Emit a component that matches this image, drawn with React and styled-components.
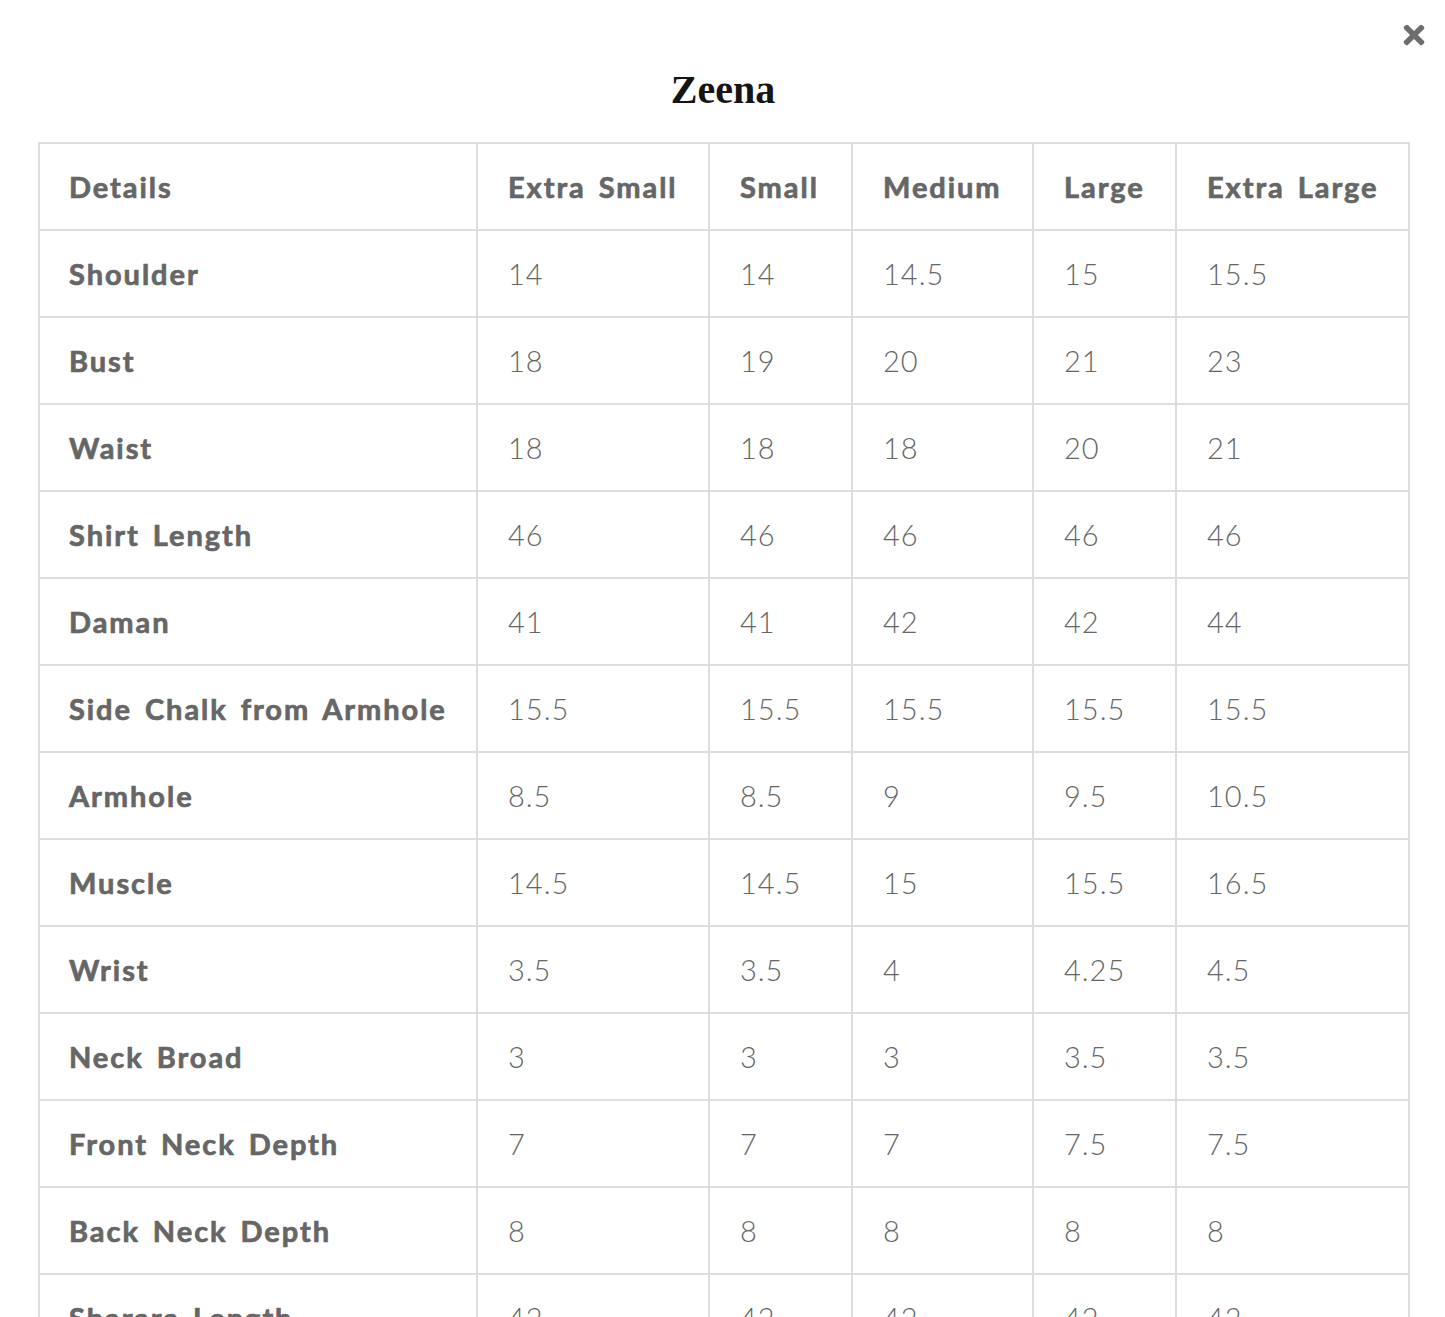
import React from 'react';
import styled, { createGlobalStyle } from 'styled-components';
import { FaTimes } from 'react-icons/fa';

const GlobalStyle = createGlobalStyle`
  html, body {
    margin: 0;
    padding: 0;
    background: #fff;
  }
  body {
    font-family: Lato, 'Liberation Sans', sans-serif;
    color: #666;
  }
`;

const Modal = styled.div`
  position: relative;
  padding: 64px 37px 0 38px;
  height: 1317px;
  overflow: hidden;
  box-sizing: border-box;
`;

const CloseButton = styled.button`
  position: absolute;
  top: 20px;
  right: 16px;
  border: 0;
  background: none;
  padding: 0;
  color: #6d6d6d;
  font-size: 30px;
  line-height: 0;
  cursor: pointer;
`;

const Title = styled.h2`
  margin: 0 0 26px;
  text-align: center;
  font-family: 'Liberation Serif', 'DejaVu Serif', serif;
  font-weight: 700;
  font-size: 40px;
  line-height: 52px;
  color: #151515;
`;

const Table = styled.table`
  width: 1370px;
  table-layout: fixed;
  border-collapse: collapse;
`;

const Cell = styled.td`
  height: 85px;
  padding: 0 0 0 ${({ first }) => (first ? 29 : 30)}px;
  border: 2px solid #ddd;
  font-size: 29px;
  font-weight: ${({ bold }) => (bold ? 700 : 300)};
  letter-spacing: ${({ bold }) => (bold ? '1.95px' : '1px')};
  word-spacing: ${({ bold }) => (bold ? '4px' : '0')};
  -webkit-text-stroke: ${({ bold }) => (bold ? '0.7px #666' : '0')};
  color: #666;
  text-align: left;
  vertical-align: middle;
  white-space: nowrap;
`;

const widths = [438, 232, 143, 181, 143, 233];

const sizes = ['Extra Small', 'Small', 'Medium', 'Large', 'Extra Large'];

const rows = [
  ['Shoulder', '14', '14', '14.5', '15', '15.5'],
  ['Bust', '18', '19', '20', '21', '23'],
  ['Waist', '18', '18', '18', '20', '21'],
  ['Shirt Length', '46', '46', '46', '46', '46'],
  ['Daman', '41', '41', '42', '42', '44'],
  ['Side Chalk from Armhole', '15.5', '15.5', '15.5', '15.5', '15.5'],
  ['Armhole', '8.5', '8.5', '9', '9.5', '10.5'],
  ['Muscle', '14.5', '14.5', '15', '15.5', '16.5'],
  ['Wrist', '3.5', '3.5', '4', '4.25', '4.5'],
  ['Neck Broad', '3', '3', '3', '3.5', '3.5'],
  ['Front Neck Depth', '7', '7', '7', '7.5', '7.5'],
  ['Back Neck Depth', '8', '8', '8', '8', '8'],
  ['Sharara Length', '42', '42', '42', '42', '42'],
];

const App = () => (
  <>
    <GlobalStyle />
    <Modal>
      <CloseButton aria-label="Close">
        <FaTimes />
      </CloseButton>
      <Title>Zeena</Title>
      <Table>
        <colgroup>
          {widths.map((w, i) => (
            <col key={i} style={{ width: w }} />
          ))}
        </colgroup>
        <thead>
          <tr>
            <Cell as="th" first bold>
              Details
            </Cell>
            {sizes.map((s) => (
              <Cell as="th" key={s} bold>
                {s}
              </Cell>
            ))}
          </tr>
        </thead>
        <tbody>
          {rows.map(([label, ...values]) => (
            <tr key={label}>
              <Cell first bold>
                {label}
              </Cell>
              {values.map((v, i) => (
                <Cell key={sizes[i]}>{v}</Cell>
              ))}
            </tr>
          ))}
        </tbody>
      </Table>
    </Modal>
  </>
);

export default App;
